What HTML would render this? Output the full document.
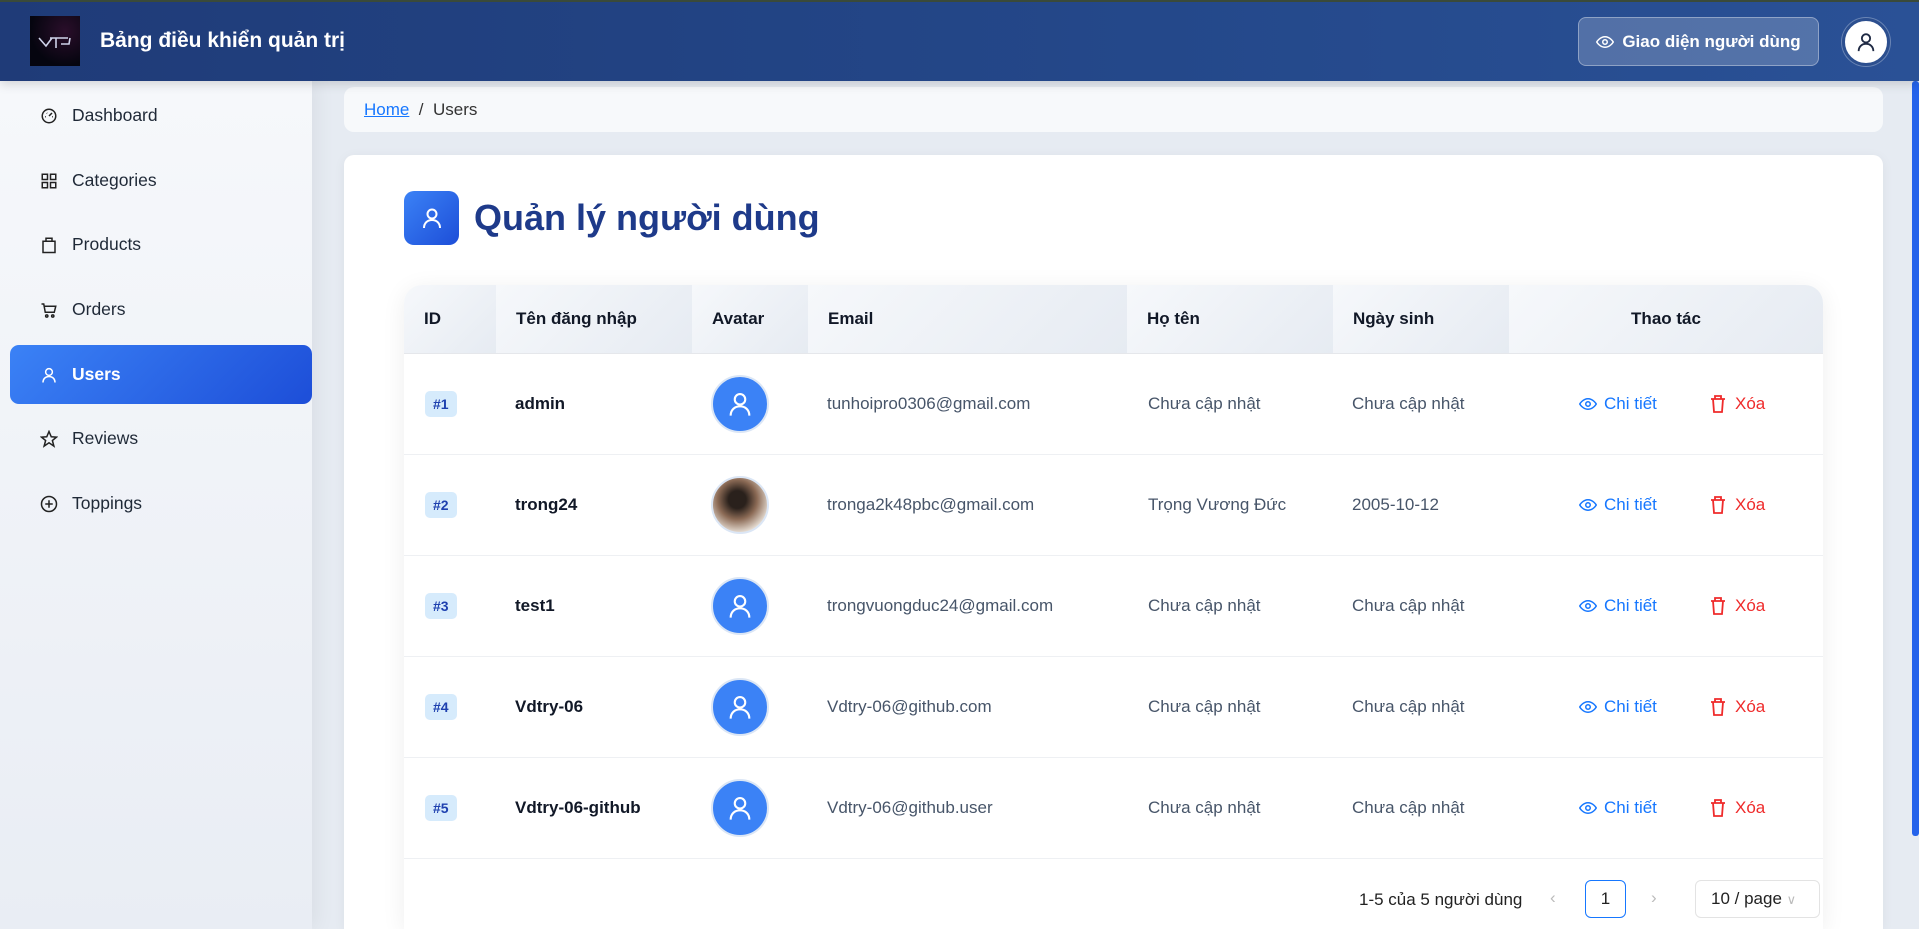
<!DOCTYPE html>
<html><head><meta charset="utf-8"><style>
*{box-sizing:border-box;margin:0;padding:0}
html{width:1919px;height:929px;overflow:hidden}
body{width:1919px;height:929px;overflow:hidden;font-family:"Liberation Sans",sans-serif;background:#e6ebf2;position:relative;color:#1f2937}
.hdr{position:absolute;left:0;top:0;width:1919px;height:81px;background:linear-gradient(90deg,#1f3b78,#24488a 60%,#2a5196);box-shadow:0 3px 10px rgba(0,0,0,.15);z-index:3}
.hdr .top{position:absolute;left:0;top:0;width:100%;height:2px;background:#3a4a3a}
.logo{position:absolute;left:30px;top:16px;width:50px;height:50px;background:radial-gradient(circle at 70% 30%,#2a0e2a,#05050f 70%)}
.title{position:absolute;left:100px;top:29px;color:#fff;font-size:21px;font-weight:bold}
.btn{position:absolute;left:1578px;top:17px;width:241px;height:49px;border:1px solid rgba(255,255,255,.35);border-radius:8px;background:rgba(255,255,255,.2);color:#fff;font-weight:bold;font-size:17px;display:flex;align-items:center;justify-content:center;gap:8px}
.av{position:absolute;left:1842px;top:18px;width:48px;height:48px;border-radius:50%;background:#fff;border:3px solid #2c4f8f;box-shadow:0 0 0 1px rgba(255,255,255,.3);display:flex;align-items:center;justify-content:center}
.side{position:absolute;left:0;top:81px;width:312px;height:848px;background:linear-gradient(180deg,#f6f8fb,#e9edf4);box-shadow:4px 0 20px rgba(0,0,0,.06);z-index:2}
.mi{position:absolute;left:10px;width:302px;height:59px;display:flex;align-items:center;padding-left:30px;font-size:17.5px;color:#1f2937;gap:14px}
.mi.act{background:linear-gradient(135deg,#3b82f6,#1d4ed8);color:#fff;border-radius:9px;font-weight:bold}
.mi svg{width:18px;height:18px}
.bc{position:absolute;left:344px;top:87px;width:1539px;height:45px;background:#f7f9fb;border-radius:10px;font-size:17px;padding:13px 20px;color:#333}
.bc a{color:#1677ff;text-decoration:underline}
.card{position:absolute;left:344px;top:155px;width:1539px;height:774px;background:#fff;border-radius:10px 10px 0 0;box-shadow:0 2px 12px rgba(0,0,0,.05)}
.ticon{position:absolute;left:404px;top:191px;width:55px;height:54px;border-radius:10px;background:linear-gradient(135deg,#3b82f6,#1d4ed8);display:flex;align-items:center;justify-content:center}
.h1{position:absolute;left:474px;top:197px;font-size:36px;font-weight:bold;color:#1e3a8a}
.tbl{position:absolute;left:404px;top:285px;width:1419px;height:644px;border-radius:18px 18px 0 0;background:#fff;box-shadow:0 4px 24px rgba(0,0,0,.07);overflow:hidden}
.th{position:absolute;top:0;height:69px;background:linear-gradient(135deg,#f6f8fb,#e6ebf2);font-size:17px;font-weight:600;color:#111827;display:flex;align-items:center;padding-left:20px;border-bottom:1px solid #e5e7eb}
.row{position:absolute;left:0;width:1419px;height:101px;border-bottom:1px solid #eef0f3}
.c{position:absolute;top:0;height:100px;display:flex;align-items:center;font-size:17px;color:#475569}
.badge{background:#d6ebfc;color:#1e40af;font-size:14px;font-weight:600;padding:5px 8px;border-radius:5px}
.u{font-weight:bold;color:#111827}
.ava{width:58px;height:58px;border-radius:50%;background:#3b82f6;border:2px solid #dbe6f5;display:flex;align-items:center;justify-content:center}
.ct{color:#1677ff;gap:7px}
.xo{color:#ef2b2b;gap:9px}
.pg{position:absolute;font-size:17px;color:#222}
</style></head><body>
<div class="hdr"><div class="top"></div><div class="logo"><svg width="50" height="50"><path d="M9 22l7 8 6-8M20 22h18M26 22v10M31 28h8l1-6" stroke="#cfd3ea" stroke-width="1.6" fill="none"/></svg></div>
<div class="title">Bảng điều khiển quản trị</div>
<div class="btn"><svg width="18" height="18" viewBox="0 0 24 24" fill="none" stroke="#fff" stroke-width="2"><path d="M1 12s4-7 11-7 11 7 11 7-4 7-11 7S1 12 1 12z"/><circle cx="12" cy="12" r="3"/></svg>Giao diện người dùng</div>
<div class="av"><svg width="22" height="22" viewBox="0 0 24 24" fill="none" stroke="#1f2a44" stroke-width="2"><circle cx="12" cy="8" r="4.5"/><path d="M4 22c0-5 3.5-8 8-8s8 3 8 8"/></svg></div>
</div>
<div class="side">
<div class="mi" style="top:5px"><svg viewBox="0 0 24 24" fill="none" stroke="#222" stroke-width="2"><circle cx="12" cy="12" r="9"/><path d="M12 12l4-4M7 13h1M16 13h1M9 8l.5.5"/></svg>Dashboard</div>
<div class="mi" style="top:70px"><svg viewBox="0 0 24 24" fill="none" stroke="#222" stroke-width="2"><rect x="3" y="3" width="7" height="7"/><rect x="14" y="3" width="7" height="7"/><rect x="3" y="14" width="7" height="7"/><rect x="14" y="14" width="7" height="7"/></svg>Categories</div>
<div class="mi" style="top:134px"><svg viewBox="0 0 24 24" fill="none" stroke="#222" stroke-width="2"><rect x="4" y="7" width="16" height="15"/><path d="M8 7V3h8v4"/></svg>Products</div>
<div class="mi" style="top:199px"><svg viewBox="0 0 24 24" fill="none" stroke="#222" stroke-width="2"><path d="M2 4h3l2 11h12l2-8H6"/><circle cx="9" cy="20" r="1.5"/><circle cx="17" cy="20" r="1.5"/></svg>Orders</div>
<div class="mi act" style="top:264px"><svg viewBox="0 0 24 24" fill="none" stroke="#fff" stroke-width="2"><circle cx="12" cy="8" r="4.5"/><path d="M4 22c0-5 3.5-8 8-8s8 3 8 8"/></svg>Users</div>
<div class="mi" style="top:328px"><svg viewBox="0 0 24 24" fill="none" stroke="#222" stroke-width="2"><path d="M12 2l3 7 7 .5-5.5 4.5 2 7.5L12 17l-6.5 4.5 2-7.5L2 9.5 9 9z"/></svg>Reviews</div>
<div class="mi" style="top:393px"><svg viewBox="0 0 24 24" fill="none" stroke="#222" stroke-width="2"><circle cx="12" cy="12" r="10"/><path d="M12 7v10M7 12h10"/></svg>Toppings</div>
</div>
<div class="bc"><a>Home</a>&nbsp; / &nbsp;Users</div>
<div class="card"></div>
<div class="ticon"><svg width="24" height="24" viewBox="0 0 24 24" fill="none" stroke="#fff" stroke-width="2"><circle cx="12" cy="8" r="4.5"/><path d="M4 22c0-5 3.5-8 8-8s8 3 8 8"/></svg></div>
<div class="h1">Quản lý người dùng</div>
<div class="tbl">
<div class="th" style="left:0;width:92px">ID</div>
<div class="th" style="left:92px;width:196px">Tên đăng nhập</div>
<div class="th" style="left:288px;width:116px">Avatar</div>
<div class="th" style="left:404px;width:319px">Email</div>
<div class="th" style="left:723px;width:206px">Họ tên</div>
<div class="th" style="left:929px;width:176px">Ngày sinh</div>
<div class="th" style="left:1105px;width:314px;justify-content:center;padding:0">Thao tác</div>
<div class="row" style="top:69px"><div class="c" style="left:21px"><span class="badge">#1</span></div><div class="c u" style="left:111px">admin</div><div class="c" style="left:307px"><div class="ava"><svg width="28" height="28" viewBox="0 0 24 24" fill="none" stroke="#fff" stroke-width="1.8"><circle cx="12" cy="8" r="4.5"/><path d="M4 22c0-5 3.5-8 8-8s8 3 8 8"/></svg></div></div><div class="c" style="left:423px">tunhoipro0306@gmail.com</div><div class="c" style="left:744px">Chưa cập nhật</div><div class="c" style="left:948px">Chưa cập nhật</div><div class="c ct" style="left:1175px"><svg width="18" height="18" viewBox="0 0 24 24" fill="none" stroke="#1677ff" stroke-width="2"><path d="M1 12s4-7 11-7 11 7 11 7-4 7-11 7S1 12 1 12z"/><circle cx="12" cy="12" r="3"/></svg>Chi tiết</div><div class="c xo" style="left:1306px"><svg width="16" height="18" viewBox="0 0 16 18" fill="none" stroke="#ef2b2b" stroke-width="1.8"><path d="M1 4h14M5 4V1h6v3M3 4l1 13h8l1-13"/></svg>Xóa</div></div>
<div class="row" style="top:170px"><div class="c" style="left:21px"><span class="badge">#2</span></div><div class="c u" style="left:111px">trong24</div><div class="c" style="left:307px"><div class="ava" style="background:radial-gradient(circle at 45% 40%,#2a211c 20%,#8b6a55 45%,#e6ddd3 75%)"></div></div><div class="c" style="left:423px">tronga2k48pbc@gmail.com</div><div class="c" style="left:744px">Trọng Vương Đức</div><div class="c" style="left:948px">2005-10-12</div><div class="c ct" style="left:1175px"><svg width="18" height="18" viewBox="0 0 24 24" fill="none" stroke="#1677ff" stroke-width="2"><path d="M1 12s4-7 11-7 11 7 11 7-4 7-11 7S1 12 1 12z"/><circle cx="12" cy="12" r="3"/></svg>Chi tiết</div><div class="c xo" style="left:1306px"><svg width="16" height="18" viewBox="0 0 16 18" fill="none" stroke="#ef2b2b" stroke-width="1.8"><path d="M1 4h14M5 4V1h6v3M3 4l1 13h8l1-13"/></svg>Xóa</div></div>
<div class="row" style="top:271px"><div class="c" style="left:21px"><span class="badge">#3</span></div><div class="c u" style="left:111px">test1</div><div class="c" style="left:307px"><div class="ava"><svg width="28" height="28" viewBox="0 0 24 24" fill="none" stroke="#fff" stroke-width="1.8"><circle cx="12" cy="8" r="4.5"/><path d="M4 22c0-5 3.5-8 8-8s8 3 8 8"/></svg></div></div><div class="c" style="left:423px">trongvuongduc24@gmail.com</div><div class="c" style="left:744px">Chưa cập nhật</div><div class="c" style="left:948px">Chưa cập nhật</div><div class="c ct" style="left:1175px"><svg width="18" height="18" viewBox="0 0 24 24" fill="none" stroke="#1677ff" stroke-width="2"><path d="M1 12s4-7 11-7 11 7 11 7-4 7-11 7S1 12 1 12z"/><circle cx="12" cy="12" r="3"/></svg>Chi tiết</div><div class="c xo" style="left:1306px"><svg width="16" height="18" viewBox="0 0 16 18" fill="none" stroke="#ef2b2b" stroke-width="1.8"><path d="M1 4h14M5 4V1h6v3M3 4l1 13h8l1-13"/></svg>Xóa</div></div>
<div class="row" style="top:372px"><div class="c" style="left:21px"><span class="badge">#4</span></div><div class="c u" style="left:111px">Vdtry-06</div><div class="c" style="left:307px"><div class="ava"><svg width="28" height="28" viewBox="0 0 24 24" fill="none" stroke="#fff" stroke-width="1.8"><circle cx="12" cy="8" r="4.5"/><path d="M4 22c0-5 3.5-8 8-8s8 3 8 8"/></svg></div></div><div class="c" style="left:423px">Vdtry-06@github.com</div><div class="c" style="left:744px">Chưa cập nhật</div><div class="c" style="left:948px">Chưa cập nhật</div><div class="c ct" style="left:1175px"><svg width="18" height="18" viewBox="0 0 24 24" fill="none" stroke="#1677ff" stroke-width="2"><path d="M1 12s4-7 11-7 11 7 11 7-4 7-11 7S1 12 1 12z"/><circle cx="12" cy="12" r="3"/></svg>Chi tiết</div><div class="c xo" style="left:1306px"><svg width="16" height="18" viewBox="0 0 16 18" fill="none" stroke="#ef2b2b" stroke-width="1.8"><path d="M1 4h14M5 4V1h6v3M3 4l1 13h8l1-13"/></svg>Xóa</div></div>
<div class="row" style="top:473px"><div class="c" style="left:21px"><span class="badge">#5</span></div><div class="c u" style="left:111px">Vdtry-06-github</div><div class="c" style="left:307px"><div class="ava"><svg width="28" height="28" viewBox="0 0 24 24" fill="none" stroke="#fff" stroke-width="1.8"><circle cx="12" cy="8" r="4.5"/><path d="M4 22c0-5 3.5-8 8-8s8 3 8 8"/></svg></div></div><div class="c" style="left:423px">Vdtry-06@github.user</div><div class="c" style="left:744px">Chưa cập nhật</div><div class="c" style="left:948px">Chưa cập nhật</div><div class="c ct" style="left:1175px"><svg width="18" height="18" viewBox="0 0 24 24" fill="none" stroke="#1677ff" stroke-width="2"><path d="M1 12s4-7 11-7 11 7 11 7-4 7-11 7S1 12 1 12z"/><circle cx="12" cy="12" r="3"/></svg>Chi tiết</div><div class="c xo" style="left:1306px"><svg width="16" height="18" viewBox="0 0 16 18" fill="none" stroke="#ef2b2b" stroke-width="1.8"><path d="M1 4h14M5 4V1h6v3M3 4l1 13h8l1-13"/></svg>Xóa</div></div>
</div>
<div class="pg" style="left:1359px;top:890px">1-5 của 5 người dùng</div>
<div class="pg" style="left:1550px;top:888px;color:#bbb">&#8249;</div>
<div class="pg" style="left:1585px;top:880px;width:41px;height:38px;border:1px solid #1677ff;border-radius:6px;text-align:center;line-height:36px">1</div>
<div class="pg" style="left:1651px;top:888px;color:#bbb">&#8250;</div>
<div class="pg" style="left:1695px;top:880px;width:125px;height:38px;border:1px solid #e3e3e3;border-radius:6px;line-height:36px;padding-left:15px">10 / page <span style="color:#bbb;font-size:13px">&#8744;</span></div>
<div style="position:absolute;left:1912px;top:81px;width:7px;height:755px;background:#2563eb;border-radius:3px"></div>
</body></html>
